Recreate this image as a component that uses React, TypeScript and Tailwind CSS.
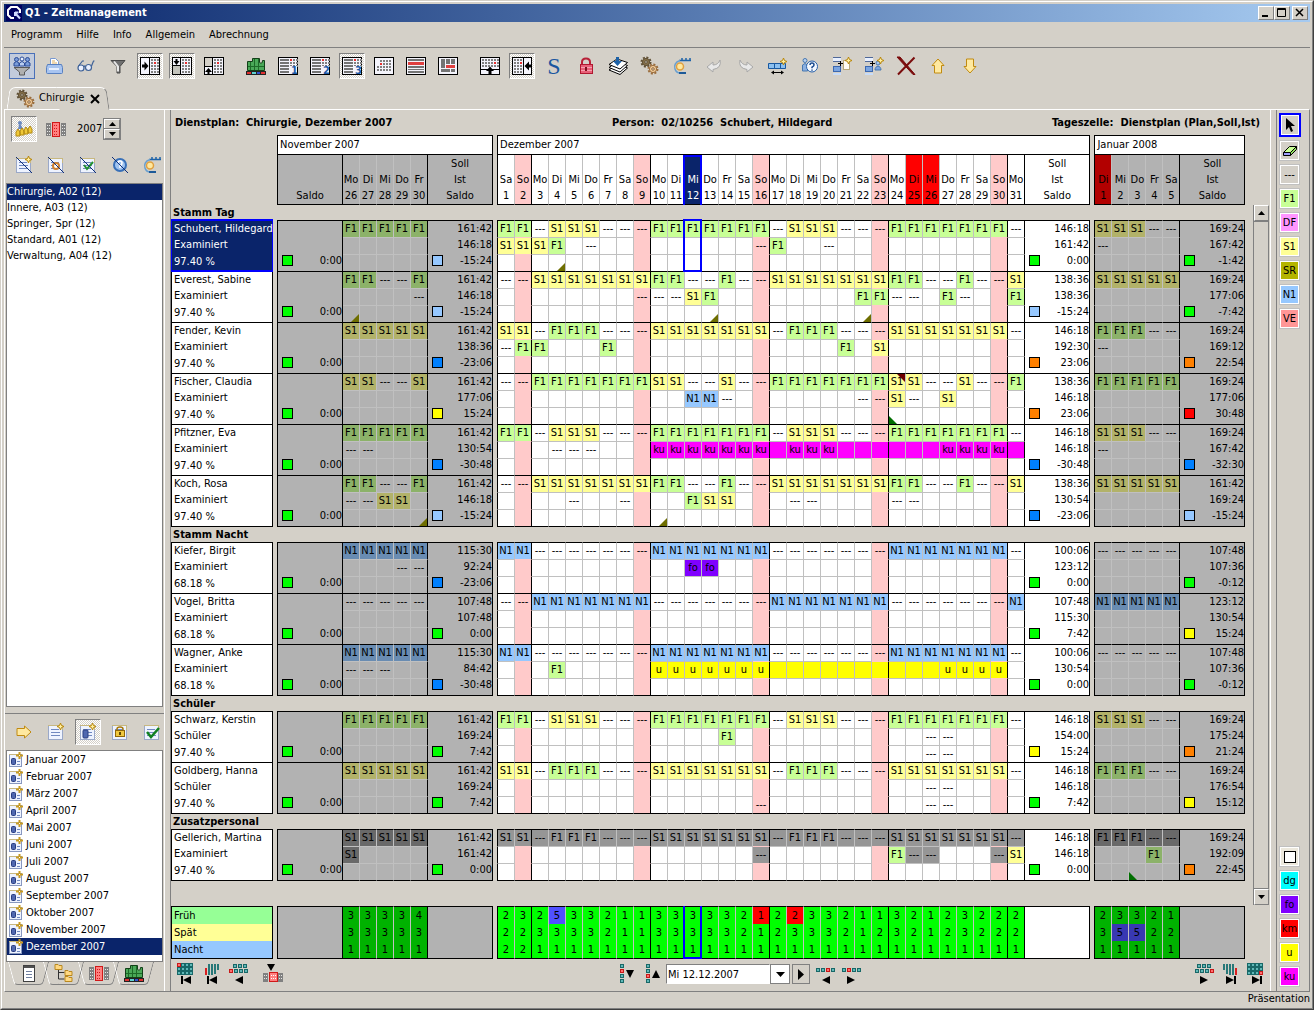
import { Fragment } from "react";
import type { ReactNode } from "react";
import clsx from "clsx";

type Sum = { color: string; values: string[] };

type Person = {
  name: string;
  role: string;
  quota: string;
  nov: string[];
  dec: string[];
  jan: string[];
  novSum: Sum;
  decSum: Sum;
  janSum: Sum;
};

type Month = "nov" | "dec" | "jan";

const WEEKDAYS = ["Sa", "So", "Mo", "Di", "Mi", "Do", "Fr"];
const NOV_DAYS = ["Mo 26", "Di 27", "Mi 28", "Do 29", "Fr 30"];
const DEC_DAYS = Array.from({ length: 31 }, (_, i) => `${WEEKDAYS[i % 7]} ${i + 1}`);
const JAN_DAYS = ["Di 1", "Mi 2", "Do 3", "Fr 4", "Sa 5"];
const SELECTED_DAY = 11;

const MONTHS = [
  "Januar",
  "Februar",
  "März",
  "April",
  "Mai",
  "Juni",
  "Juli",
  "August",
  "September",
  "Oktober",
  "November",
  "Dezember",
];

const WARDS = [
  "Chirurgie, A02 (12)",
  "Innere, A03 (12)",
  "Springer, Spr (12)",
  "Standard, A01 (12)",
  "Verwaltung, A04 (12)",
];

// One character per day. Upper case K and U are absence days without a label,
// lower case f, s and "=" are shifts of additional staff.
const EARLY = "FF-SSS---FFFFFFF-SSS---FFFFFFF-";
const LATE = "SS-FFF---SSSSSSS-FFF---SSSSSSS-";
const FILL_EARLY = "--FFFFFFFSS--S--FFFFFFFSS--S--F";
const FILL_LATE = "--SSSSSSSFF--F--SSSSSSSFF--F--S";
const NIGHT = "NN-------NNNNNNN-------NNNNNNN-";

const LABELS: Record<string, string> = {
  F: "F1",
  f: "F1",
  S: "S1",
  s: "S1",
  N: "N1",
  "-": "---",
  "=": "---",
  k: "ku",
  u: "u",
  o: "fo",
};

const FILLS: Record<string, string> = {
  F: "bg-[#c8ff96]",
  S: "bg-[#ffff96]",
  N: "bg-[#96c8ff]",
  k: "bg-[#ff00ff]",
  K: "bg-[#ff00ff]",
  u: "bg-[#ffff00]",
  U: "bg-[#ffff00]",
  o: "bg-[#8000ff]",
  f: "bg-[#969696]",
  s: "bg-[#969696]",
  "=": "bg-[#969696]",
};

const DIM_FILLS: Record<string, string> = {
  F: "bg-[#8cb269]",
  S: "bg-[#b2b269]",
  N: "bg-[#698cb2]",
  f: "bg-[#696969]",
  s: "bg-[#696969]",
  "=": "bg-[#696969]",
};

const SQUARES: Record<string, string> = {
  green: "bg-[#00ff00]",
  light: "bg-[#96c8ff]",
  blue: "bg-[#0080ff]",
  yellow: "bg-[#ffff00]",
  orange: "bg-[#ff8000]",
  red: "bg-[#ff0000]",
};

const sum = (color: string, ...values: string[]): Sum => ({ color, values });

const GROUPS: { title: string; people: Person[] }[] = [
  {
    title: "Stamm Tag",
    people: [
      {
        name: "Schubert, Hildegard",
        role: "Examiniert",
        quota: "97.40 %",
        nov: ["FFFFF"],
        dec: [EARLY, "SSSF.-.........-F..-..........."],
        jan: ["SSS--", "-...."],
        novSum: sum("light", "161:42", "146:18", "-15:24"),
        decSum: sum("green", "146:18", "161:42", "0:00"),
        janSum: sum("green", "169:24", "167:42", "-1:42"),
      },
      {
        name: "Everest, Sabine",
        role: "Examiniert",
        quota: "97.40 %",
        nov: ["FF--F", "....-"],
        dec: [FILL_LATE, "........---SF........FF--.F-..F"],
        jan: ["SSSSS"],
        novSum: sum("light", "161:42", "146:18", "-15:24"),
        decSum: sum("light", "138:36", "138:36", "-15:24"),
        janSum: sum("green", "169:24", "177:06", "-7:42"),
      },
      {
        name: "Fender, Kevin",
        role: "Examiniert",
        quota: "97.40 %",
        nov: ["SSSSS"],
        dec: [LATE, "-FF...F.............F.S........"],
        jan: ["FFF--", "-...."],
        novSum: sum("blue", "161:42", "138:36", "-23:06"),
        decSum: sum("orange", "146:18", "192:30", "23:06"),
        janSum: sum("orange", "169:24", "169:12", "22:54"),
      },
      {
        name: "Fischer, Claudia",
        role: "Examiniert",
        quota: "97.40 %",
        nov: ["SS--S"],
        dec: [FILL_EARLY, "...........NN-.......--S-.S...."],
        jan: ["FFFFF"],
        novSum: sum("yellow", "161:42", "177:06", "15:24"),
        decSum: sum("orange", "138:36", "146:18", "23:06"),
        janSum: sum("red", "169:24", "177:06", "30:48"),
      },
      {
        name: "Pfitzner, Eva",
        role: "Examiniert",
        quota: "97.40 %",
        nov: ["FFFFF", "--..."],
        dec: [EARLY, "...---...kkkkkkkKkkkKKKKKKkkkkK"],
        jan: ["SSS--", "-...."],
        novSum: sum("blue", "161:42", "130:54", "-30:48"),
        decSum: sum("blue", "146:18", "146:18", "-30:48"),
        janSum: sum("blue", "169:24", "167:42", "-32:30"),
      },
      {
        name: "Koch, Rosa",
        role: "Examiniert",
        quota: "97.40 %",
        nov: ["FF--F", "--SS."],
        dec: [FILL_LATE, "....-..-...FSS...--....--......"],
        jan: ["SSSSS"],
        novSum: sum("light", "161:42", "146:18", "-15:24"),
        decSum: sum("blue", "138:36", "130:54", "-23:06"),
        janSum: sum("light", "161:42", "169:24", "-15:24"),
      },
    ],
  },
  {
    title: "Stamm Nacht",
    people: [
      {
        name: "Kiefer, Birgit",
        role: "Examiniert",
        quota: "68.18 %",
        nov: ["NNNNN", "...--"],
        dec: [NIGHT, "...........oo.................."],
        jan: ["-----"],
        novSum: sum("blue", "115:30", "92:24", "-23:06"),
        decSum: sum("green", "100:06", "123:12", "0:00"),
        janSum: sum("green", "107:48", "107:36", "-0:12"),
      },
      {
        name: "Vogel, Britta",
        role: "Examiniert",
        quota: "68.18 %",
        nov: ["-----"],
        dec: ["--NNNNNNN-------NNNNNNN-------N"],
        jan: ["NNNNN"],
        novSum: sum("green", "107:48", "107:48", "0:00"),
        decSum: sum("green", "107:48", "115:30", "7:42"),
        janSum: sum("yellow", "123:12", "130:54", "15:24"),
      },
      {
        name: "Wagner, Anke",
        role: "Examiniert",
        quota: "68.18 %",
        nov: ["NNNNN", "---.."],
        dec: [NIGHT, "...F.....uuuuuuuUUUUUUUUUUuuuu."],
        jan: ["-----"],
        novSum: sum("blue", "115:30", "84:42", "-30:48"),
        decSum: sum("green", "100:06", "130:54", "0:00"),
        janSum: sum("green", "107:48", "107:36", "-0:12"),
      },
    ],
  },
  {
    title: "Schüler",
    people: [
      {
        name: "Schwarz, Kerstin",
        role: "Schüler",
        quota: "97.40 %",
        nov: ["FFFFF"],
        dec: [
          EARLY,
          ".............F...........--....",
          ".........................--....",
        ],
        jan: ["SSS--"],
        novSum: sum("green", "161:42", "169:24", "7:42"),
        decSum: sum("yellow", "146:18", "154:00", "15:24"),
        janSum: sum("orange", "169:24", "175:24", "21:24"),
      },
      {
        name: "Goldberg, Hanna",
        role: "Schüler",
        quota: "97.40 %",
        nov: ["SSSSS"],
        dec: [
          LATE,
          ".........................--....",
          "...............-.........--....",
        ],
        jan: ["FFF--"],
        novSum: sum("green", "161:42", "169:24", "7:42"),
        decSum: sum("green", "146:18", "146:18", "7:42"),
        janSum: sum("yellow", "169:24", "176:54", "15:12"),
      },
    ],
  },
  {
    title: "Zusatzpersonal",
    people: [
      {
        name: "Gellerich, Martina",
        role: "Examiniert",
        quota: "97.40 %",
        nov: ["sssss", "s...."],
        dec: [
          "ss=fff===sssssss=fff===sssssss=",
          "...............=.......F==...=S",
        ],
        jan: ["fff==", "...F."],
        novSum: sum("green", "161:42", "161:42", "0:00"),
        decSum: sum("green", "146:18", "146:18", "0:00"),
        janSum: sum("orange", "169:24", "192:09", "22:45"),
      },
    ],
  },
];

// Corner flags, keyed by name:month:row:day index
const FLAGS: Record<string, "olive" | "green" | "red"> = {
  "Schubert, Hildegard:dec:2:3": "olive",
  "Everest, Sabine:nov:2:0": "olive",
  "Everest, Sabine:dec:2:12": "olive",
  "Everest, Sabine:dec:2:21": "olive",
  "Fischer, Claudia:dec:0:23": "red",
  "Fischer, Claudia:dec:2:23": "green",
  "Koch, Rosa:nov:2:4": "olive",
  "Koch, Rosa:dec:2:9": "olive",
  "Gellerich, Martina:jan:2:2": "green",
};

const STAFFING = [
  {
    label: "Früh",
    bg: "bg-[#96ff96]",
    nov: "33334",
    dec: "2325332113333321223321132123222",
    jan: "23321",
  },
  {
    label: "Spät",
    bg: "bg-[#ffff96]",
    nov: "33333",
    dec: "2233332113333321233321232123222",
    jan: "35522",
  },
  {
    label: "Nacht",
    bg: "bg-[#96c8ff]",
    nov: "11111",
    dec: "2211111111111111111111111111111",
    jan: "11111",
  },
];

const isSunday = (month: Month, day: number) => month === "dec" && day % 7 === 1;

function rightLine(month: Month, day: number) {
  if (month === "dec") {
    return isSunday(month, day) || day === 30 ? "border-r-black" : "border-r-[#c0c0c0]";
  }
  return day === 4 ? "border-r-black" : "border-r-[#c0c0c0]";
}

const hasLeftLine = (month: Month, day: number) => month !== "nov" && day === 0;

/* ---------- icons ---------- */

function Pic({ children, w = 20, h = 20 }: { children: ReactNode; w?: number; h?: number }) {
  return (
    <svg width={w} height={h} viewBox={`0 0 ${w} ${h}`} fill="none" aria-hidden="true" className="shrink-0 overflow-visible">
      {children}
    </svg>
  );
}

function Spark({ x, y }: { x: number; y: number }) {
  return (
    <path
      transform={`translate(${x} ${y})`}
      d="M3.5 0 L4.5 2.5 L7 3.5 L4.5 4.5 L3.5 7 L2.5 4.5 L0 3.5 L2.5 2.5Z"
      fill="#fff0a0"
      stroke="#b8860b"
      strokeWidth="1"
    />
  );
}

function Dots({ x, y, cols, rows, red }: { x: number; y: number; cols: number; rows: number; red?: number }) {
  return (
    <g shapeRendering="crispEdges">
      {Array.from({ length: cols * rows }, (_, i) => (
        <rect
          key={i}
          x={x + (i % cols) * 3}
          y={y + Math.floor(i / cols) * 3}
          width="2"
          height="2"
          fill={i === red ? "#e83030" : "#808080"}
        />
      ))}
    </g>
  );
}

function Frame({ children }: { children?: ReactNode }) {
  return (
    <Pic>
      <rect x="0.5" y="1.5" width="19" height="17" fill="#f4f4fc" stroke="#000" />
      {children}
    </Pic>
  );
}

function Bars({ n, w = 9 }: { n: number; w?: number }) {
  return (
    <g fill="#747474" shapeRendering="crispEdges">
      {Array.from({ length: n }, (_, i) => (
        <rect key={i} x="2" y={3 + i * 3} width={w} height="2" />
      ))}
    </g>
  );
}

function NumberedPlan({ n }: { n: string }) {
  return (
    <Frame>
      <Bars n={5} />
      <Dots x={12} y={3} cols={2} rows={3} red={0} />
      <Dots x={18} y={3} cols={1} rows={3} />
      <rect x="12" y="10" width="7" height="8" fill="#f4f4fc" />
      <text x="13" y="18" fontSize="11" fontWeight="700" fill="#1c5aa8">
        {n}
      </text>
    </Frame>
  );
}

const Gear = ({ x, y, fill, line }: { x: number; y: number; fill: string; line: string }) => (
  <g transform={`translate(${x} ${y})`}>
    <circle r="4.5" stroke={line} strokeWidth="2" strokeDasharray="2 1.5" />
    <circle r="3.6" fill={fill} stroke={line} strokeWidth="1" />
    <circle r="1.3" fill="#d4d0c8" stroke={line} strokeWidth="1" />
  </g>
);

const GearsIcon = () => (
  <Pic>
    <Gear x={6} y={6} fill="#85704a" line="#5f4f34" />
    <Gear x={13} y={13} fill="#f0cb98" line="#9a6c3c" />
  </Pic>
);

const StationIcon = () => (
  <Pic>
    <path d="M1.500 14.500V5.500h5v-3h7v4q3 2 3-2h2v10z" fill="#4aa858" stroke="#124018" />
    <path d="M4.500 6v8M8.500 3v11M12.500 3v11M2 10.500h16" stroke="#1d6a28" />
    <g shapeRendering="crispEdges">
      <rect x="0" y="15" width="20" height="4" fill="#222" />
      <rect x="1" y="16" width="4" height="2" fill="#e03030" />
      <rect x="6" y="16" width="4" height="2" fill="#5fd0d0" />
      <rect x="11" y="16" width="3" height="2" fill="#3050d0" />
      <rect x="15" y="16" width="4" height="2" fill="#e03030" />
    </g>
  </Pic>
);

const MonthsIcon = () => (
  <Pic>
    <rect x="0" y="4" width="5" height="13" fill="#808080" />
    <rect x="15" y="4" width="5" height="13" fill="#808080" />
    <rect x="6.500" y="3.500" width="7" height="14" fill="#ff8080" stroke="#d01818" />
    <path d="M8 6.500h4M8 9.500h4M8 12.500h4M8 15.500h4" stroke="#d01818" strokeDasharray="1 1" />
    <path d="M1 6.500h3M1 9.500h3M1 12.500h3M1 15.500h3M16 6.500h3M16 9.500h3M16 12.500h3M16 15.500h3" stroke="#e8e8e8" strokeDasharray="1 1" />
  </Pic>
);

const ToolIcon = () => (
  <Pic>
    <path d="M7 4.500h12M10 4v-2M14 4v-2M18 4v-2" stroke="#1d62a8" strokeWidth="1.500" />
    <path d="M8 4.500C3 6 2 10 3 13c1 3 3 4 5 4h6" stroke="#6aa0d0" strokeWidth="1.500" />
    <path d="M7 17h7" stroke="#1d5a98" strokeWidth="2" />
    <circle cx="8" cy="10.500" r="3.500" fill="#ffe9a0" stroke="#e0a040" strokeWidth="1.500" />
  </Pic>
);

const SheetIcon = ({ children }: { children?: ReactNode }) => (
  <Pic>
    <rect x="2.500" y="3.500" width="14" height="14" fill="#eef3ff" stroke="#9aa8c8" />
    <path d="M2 3.500h15M16.500 3v5" stroke="#c8b880" />
    <path d="M5 7.500h8M5 10.500h9M5 13.500h9" stroke="#7088c0" />
    {children}
  </Pic>
);

const Strike = () => <path d="M2 2L18 18" stroke="#10307a" />;

const PlanIcon = () => (
  <>
    <rect x="5" y="8" width="5" height="8" rx="1" fill="#5068b0" stroke="#283c80" />
    <Spark x={11} y={1} />
  </>
);

const MonthEntryIcon = () => (
  <Pic w={14} h={16}>
    <rect x="0.500" y="2.500" width="12" height="12" fill="#eef3ff" stroke="#8898c0" />
    <path d="M0 2.500h9" stroke="#c8b880" />
    <rect x="2.500" y="6.500" width="4" height="6" rx="1" fill="#5068b0" stroke="#283c80" />
    <path d="M8 9.500h3M8 12.500h3" stroke="#7088c0" />
    <path d="M10.500 0v7M7 3.500h7" stroke="#c89a20" strokeWidth="2" />
    <rect x="10" y="3" width="1" height="1" fill="#fff" />
  </Pic>
);

const SlotIcon = ({ person }: { person?: boolean }) => (
  <Pic>
    <path d="M1 1.500h8M1 5.500h8M1 18.500h8" stroke="#506898" />
    <rect x="1" y="2" width="8" height="3" fill="#e8f0ff" />
    <path d="M6 7.500h5M8.500 5v5" stroke="#000" />
    <rect x="1.500" y="10.500" width="7" height="5" fill="#7aa4e0" stroke="#3c68b0" />
    <rect x="1" y="17" width="8" height="2" fill="#c8dcf8" />
    {person ? (
      <>
        <circle cx="14" cy="7" r="2" fill="#a8c8f0" stroke="#4878b0" />
        <path d="M11 14c0-5 6-5 6 0z" fill="#7aa4e0" stroke="#4878b0" />
      </>
    ) : (
      <rect x="11.500" y="4.500" width="6" height="9" fill="#fffdf4" stroke="#b8a878" />
    )}
    <Spark x={13} y={1} />
  </Pic>
);

const ArrowPath = ({ rotate }: { rotate: number }) => (
  <path
    transform={`rotate(${rotate} 10 10)`}
    d="M10 3L16 9.500H13.500V17H6.500V9.500H4Z"
    fill="#ffe9a0"
    stroke="#c08a10"
  />
);

type Tool = { label: string; icon: ReactNode; pressed?: boolean; hover?: boolean };

const TOOL_GROUPS: Tool[][] = [
  [
    {
      label: "Personenfilter",
      hover: true,
      icon: (
        <Pic>
          <g fill="#7a9cd8" stroke="#2c4c98">
            <circle cx="4.500" cy="3.500" r="2" />
            <circle cx="15.500" cy="3.500" r="2" />
            <path d="M2 10V7q2.500-3 5 0v3zM13 10V7q2.500-3 5 0v3z" />
            <circle cx="10" cy="3" r="2" fill="#e8f0ff" />
            <path d="M7.500 10V7q2.500-3 5 0v3z" fill="#b8ccf0" />
          </g>
          <path d="M2 11.500h16l-5.500 4.500v3h-5v-3z" fill="#b0b0b0" stroke="#585858" />
        </Pic>
      ),
    },
    {
      label: "Drucken",
      icon: (
        <Pic>
          <path d="M6.500 9V2.500h5l3 3V9" fill="#fff" stroke="#7898d0" />
          <path d="M8 5h3M8 7h5" stroke="#e0b060" />
          <path d="M3.500 8.500h14l1 3v5q0 1-1 1h-14q-1 0-1-1v-5z" fill="#a8c4f0" stroke="#5880c0" />
          <path d="M5 13h10" stroke="#e8f0ff" strokeWidth="2" />
        </Pic>
      ),
    },
    {
      label: "Ansicht",
      icon: (
        <Pic>
          <g stroke="#3f6298" strokeWidth="1.200">
            <circle cx="5" cy="12" r="3" fill="#eaf0ff" />
            <circle cx="12.500" cy="11.500" r="3" fill="#eaf0ff" />
            <path d="M8 11q.5-1.500 1.500-1M2.500 10L6.500 5h1.500M15.500 10L17.500 5h1" />
          </g>
        </Pic>
      ),
    },
    {
      label: "Filter",
      icon: (
        <Pic>
          <path d="M3 4.500h14l-5 6v6.500h-3v-6.500z" fill="#707070" stroke="#484848" />
          <path d="M6 5.500l4 5v5" stroke="#e8e8e8" strokeWidth="2" />
        </Pic>
      ),
    },
    {
      label: "Vormonat",
      pressed: true,
      icon: (
        <Frame>
          <path d="M9.500 2v16" stroke="#000" />
          <path d="M2 8.500h2.500v-3l4 4.500-4 4.500v-3H2z" fill="#000" />
          <Dots x={11} y={3} cols={3} rows={5} red={4} />
        </Frame>
      ),
    },
    {
      label: "Kopf links",
      pressed: true,
      icon: (
        <Frame>
          <rect x="1" y="10" width="7" height="8" fill="#c4c4bc" />
          <path d="M8.500 2v16M1 9.500h7" stroke="#000" />
          <path d="M3.500 3h2v2h2L4.500 9 1.500 5h2z" fill="#000" />
          <Dots x={10} y={3} cols={3} rows={5} red={4} />
        </Frame>
      ),
    },
    {
      label: "Fuß links",
      icon: (
        <Frame>
          <rect x="1" y="2" width="7" height="9" fill="#d4d0c8" />
          <path d="M8.500 2v16M1 10.500h7" stroke="#000" />
          <path d="M3.500 18h2v-2h2.500l-3.500-4-3.500 4h2.500z" fill="#000" />
          <Dots x={10} y={3} cols={3} rows={5} red={4} />
        </Frame>
      ),
    },
  ],
  [
    { label: "Station", icon: <StationIcon /> },
    { label: "Plan 1", icon: <NumberedPlan n="1" /> },
    { label: "Plan 2", icon: <NumberedPlan n="2" /> },
    { label: "Plan 3", icon: <NumberedPlan n="3" />, pressed: true },
    {
      label: "Tagesraster",
      icon: (
        <Frame>
          <Dots x={6} y={4} cols={4} rows={4} red={4} />
          <Dots x={3} y={10} cols={1} rows={2} />
        </Frame>
      ),
    },
    {
      label: "Zeilen",
      icon: (
        <Frame>
          <g fill="#747474" shapeRendering="crispEdges">
            <rect x="2" y="3" width="16" height="2" />
            <rect x="2" y="6" width="16" height="3" fill="#e04040" />
            <rect x="2" y="10" width="16" height="2" />
            <rect x="2" y="13" width="16" height="1" />
            <rect x="2" y="15" width="16" height="2" />
          </g>
        </Frame>
      ),
    },
    {
      label: "Blöcke",
      icon: (
        <Frame>
          <g fill="#747474" shapeRendering="crispEdges">
            <rect x="3" y="3" width="4" height="9" />
            <rect x="8" y="3" width="4" height="5" />
            <rect x="13" y="3" width="4" height="5" />
            <rect x="8" y="9" width="9" height="3" fill="#e04040" />
            <rect x="3" y="13" width="9" height="3" />
            <rect x="13" y="13" width="4" height="3" />
          </g>
        </Frame>
      ),
    },
  ],
  [
    {
      label: "Bedarf unten",
      icon: (
        <Frame>
          <Dots x={2} y={3} cols={6} rows={3} red={10} />
          <path d="M1 13.500h18" stroke="#000" />
          <path d="M8.500 18v-3H6l4-4.500 4 4.500h-2.500v3z" fill="#000" />
        </Frame>
      ),
    },
    {
      label: "Folgemonat",
      pressed: true,
      icon: (
        <Frame>
          <path d="M11.500 2v16" stroke="#000" />
          <path d="M19 8.500h-2v-3L12.500 10l4.500 4.500v-3h2z" fill="#000" />
          <Dots x={2} y={3} cols={3} rows={5} red={5} />
        </Frame>
      ),
    },
    { label: "Soll", icon: <span className="font-['Liberation_Serif',serif] text-2xl leading-5 text-[#1a56a0]">S</span> },
    {
      label: "Sperren",
      icon: (
        <Pic>
          <path d="M6 9V6q0-3.500 4-3.500T14 6v3" stroke="#b82038" strokeWidth="2" />
          <rect x="4.500" y="8.500" width="12" height="9" fill="#e86078" stroke="#b01830" />
          <path d="M5 11.500h11M5 14.500h11" stroke="#f8a0b0" />
          <rect x="9" y="11" width="2" height="4" fill="#801020" />
        </Pic>
      ),
    },
    {
      label: "Übernehmen",
      icon: (
        <Pic>
          <g fill="#fff" stroke="#000">
            <path d="M1 14l11 4.500L19.500 12l-10-4z" />
            <path d="M1 11.500l11 4.500 7.500-6.500-10-4z" />
            <path d="M1 8.500L12 13l7.500-6.500L9 3z" />
          </g>
          <path d="M8 1h3v4h3l-4.500 5L5 5h3z" fill="#1d62a8" />
        </Pic>
      ),
    },
    { label: "Automatik", icon: <GearsIcon /> },
    { label: "Werkzeug", icon: <ToolIcon /> },
    {
      label: "Rückgängig",
      icon: (
        <Pic>
          <path d="M3 11l6-5v3q5 0 7-5 2 8-7 9.500V16z" fill="#e8e8e8" stroke="#a8a8a8" />
        </Pic>
      ),
    },
    {
      label: "Wiederholen",
      icon: (
        <Pic>
          <path d="M17 11l-6-5v3q-5 0-7-5-2 8 7 9.500V16z" fill="#e8e8e8" stroke="#a8a8a8" />
        </Pic>
      ),
    },
    {
      label: "Dienstfolge",
      icon: (
        <Pic>
          <path d="M0.500 7.500h6v5h-6zM6.500 7.500h6v5h-6zM12.500 7.500h5v5h-5z" fill="#8cc0f0" stroke="#1858a0" />
          <path d="M4 16.500h11" stroke="#000" />
          <path d="M3 16.500l3-2v4zM16 16.500l-3-2v4z" fill="#000" />
          <Spark x={12} y={2} />
        </Pic>
      ),
    },
    {
      label: "Personeninfo",
      icon: (
        <Pic>
          <circle cx="5" cy="4.500" r="2" fill="#b8d0f0" stroke="#4878b0" />
          <path d="M2.500 15V9q2.500-3 5 0v6z" fill="#8cb0e0" stroke="#4878b0" />
          <circle cx="12" cy="10.500" r="5.500" fill="#f4f8ff" stroke="#2860a8" />
          <path d="M10 9q0-2 2-2t2 2q0 1.200-2 2.200v1M12 13.500v1.200" stroke="#1c4c90" strokeWidth="1.500" />
        </Pic>
      ),
    },
    { label: "Slot einfügen", icon: <SlotIcon /> },
    { label: "Person einfügen", icon: <SlotIcon person /> },
    {
      label: "Löschen",
      icon: (
        <Pic>
          <path d="M1 1h3l15 17.500h-2z" fill="#7a0c0c" stroke="#7a0c0c" />
          <path d="M18.500 1.500L2 18.500" stroke="#7a0c0c" strokeWidth="2" />
        </Pic>
      ),
    },
    { label: "Nach oben", icon: <Pic><ArrowPath rotate={0} /></Pic> },
    { label: "Nach unten", icon: <Pic><ArrowPath rotate={180} /></Pic> },
  ],
];

const Tiles = ({ at, red }: { at: [number, number][]; red: number }) => (
  <g shapeRendering="crispEdges">
    {at.map(([x, y], i) => (
      <g key={i}>
        <rect x={x} y={y} width="4" height="4" fill={i === red ? "#c81818" : "#186868"} />
        <rect x={x + 1} y={y + 1} width="2" height="2" fill={i === red ? "#ff7070" : "#60b8b8"} />
      </g>
    ))}
  </g>
);

const Triangle = ({ dir, bar }: { dir: "left" | "right"; bar?: boolean }) =>
  dir === "left" ? (
    <g fill="#000">
      {bar && <rect x="4" y="14" width="2" height="8" />}
      <path d="M14 14v8l-8-4z" />
    </g>
  ) : (
    <g fill="#000">
      {bar && <rect x="13" y="14" width="2" height="8" />}
      <path d="M5 14v8l8-4z" />
    </g>
  );

const BLOCK: [number, number][] = Array.from({ length: 12 }, (_, i) => [(i % 4) * 4, 1 + Math.floor(i / 4) * 4]);
const LEFT_STEPS: [number, number][] = [[4, 2], [9, 2], [14, 2], [0, 7], [5, 7], [10, 7], [15, 7]];
const RIGHT_STEPS: [number, number][] = [[2, 2], [7, 2], [12, 2], [0, 7], [5, 7], [10, 7], [15, 7]];
const LINE: [number, number][] = [[0, 6], [5, 6], [10, 6], [15, 6]];
const COLUMN: [number, number][] = [[2, 2], [2, 7], [2, 12], [2, 17]];

const Columns = ({ mirror }: { mirror?: boolean }) => (
  <g shapeRendering="crispEdges" transform={mirror ? "translate(18 0) scale(-1 1)" : undefined}>
    <rect x="2" y="6" width="2" height="7" fill="#d82020" />
    <rect x="5" y="2" width="2" height="11" fill="#287878" />
    <rect x="8" y="2" width="2" height="11" fill="#287878" />
    <rect x="11" y="2" width="2" height="10" fill="#287878" />
    <rect x="14" y="2" width="2" height="6" fill="#287878" />
  </g>
);

/* ---------- controls ---------- */

const pressedLook =
  "border-t border-l border-t-[#808080] border-l-[#808080] border-r border-b border-r-white border-b-white bg-[repeating-conic-gradient(#ffffff_0_25%,#d4d0c8_0_50%)] bg-[length:2px_2px]";
const raisedLook =
  "border border-t-white border-l-white border-r-[#808080] border-b-[#808080] bg-[#d4d0c8]";

function ToolButton({ tool }: { tool: Tool }) {
  return (
    <button
      type="button"
      aria-label={tool.label}
      aria-pressed={tool.pressed}
      className={clsx(
        "flex size-[26px] shrink-0 items-center justify-center",
        tool.pressed && pressedLook,
        tool.hover && "border border-[#4a70b8] bg-[#c2cbdc]",
      )}
    >
      {tool.icon}
    </button>
  );
}

function NavButton({ label, children, w = 18 }: { label: string; children: ReactNode; w?: number }) {
  return (
    <button type="button" aria-label={label} className="flex">
      <Pic w={w} h={24}>{children}</Pic>
    </button>
  );
}

function TitleBar() {
  return (
    <header className="flex h-[18px] items-center bg-linear-to-r from-[#0a246a] to-[#a6caf0] px-0.5">
      <svg width="16" height="16" viewBox="0 0 16 16" aria-hidden="true">
        <rect width="16" height="16" fill="#000060" />
        <path d="M8 13H5L2 10V5l3-3h6l3 3v3" fill="none" stroke="#fff" strokeWidth="2" />
        <path d="M9 8l5 5.500M9 7v4M9 7.500h3.500" stroke="#d0d8ff" strokeWidth="2" />
      </svg>
      <h1 className="ml-[3px] flex-1 text-[11px] leading-4 font-bold text-white">Q1 - Zeitmanagement</h1>
      <div className="flex">
        <button type="button" aria-label="Minimieren" className={clsx("flex h-[14px] w-4 items-center justify-center", raisedLook)}>
          <Pic w={10} h={10}><path d="M1 8h6" stroke="#000" strokeWidth="2" /></Pic>
        </button>
        <button type="button" aria-label="Maximieren" className={clsx("flex h-[14px] w-4 items-center justify-center", raisedLook)}>
          <Pic w={10} h={10}><path d="M0.500 0.500h8v8h-8zM0 1.500h9" stroke="#000" /></Pic>
        </button>
        <button type="button" aria-label="Schließen" className={clsx("ml-0.5 flex h-[14px] w-4 items-center justify-center", raisedLook)}>
          <Pic w={10} h={10}><path d="M1 1l7 7M8 1L1 8" stroke="#000" strokeWidth="1.500" /></Pic>
        </button>
      </div>
    </header>
  );
}

function Sidebar() {
  return (
    <aside className="flex w-[160px] shrink-0 flex-col border-r border-white pb-1">
      <div className="flex h-9 items-center pt-0.5 pl-1.5">
        <ToolButton
          tool={{
            label: "Stationen",
            pressed: true,
            icon: (
              <Pic>
                <circle cx="6" cy="4" r="2" fill="#6888c0" />
                <path d="M4 10l1-4h2l2 4z" fill="#6888c0" />
                <g fill="#f0c838" stroke="#b08810">
                  <path d="M2 17v-4l2-3 2 3v4zM6 16v-4l2-3 2 3v4zM10 15v-4l2-3 2 3v4zM14 14v-4l2-3 2 3v4z" />
                </g>
              </Pic>
            ),
          }}
        />
        <button type="button" aria-label="Monate" className="ml-[9px]">
          <MonthsIcon />
        </button>
        <label htmlFor="year" className="sr-only">
          Jahr
        </label>
        <input id="year" defaultValue="2007" className="ml-[11px] w-[27px] bg-transparent" />
        <div className="flex flex-col">
          <button type="button" aria-label="Jahr vor" className={clsx("flex h-[10px] w-4 items-center justify-center outline outline-[#808080]", raisedLook)}>
            <Pic w={7} h={4}><path d="M0 4h7L3.500 0z" fill="#000" /></Pic>
          </button>
          <button type="button" aria-label="Jahr zurück" className={clsx("flex h-[10px] w-4 items-center justify-center outline outline-[#808080]", raisedLook)}>
            <Pic w={7} h={4}><path d="M0 0h7L3.500 4z" fill="#000" /></Pic>
          </button>
        </div>
      </div>
      <div className="flex h-[37px] items-center gap-1.5 pl-1.5">
        <ToolButton tool={{ label: "Planung aus", icon: <SheetIcon><Spark x={11} y={1} /><Strike /></SheetIcon> }} />
        <ToolButton tool={{ label: "Offen aus", icon: <SheetIcon><circle cx="10" cy="11" r="3" fill="#fff" stroke="#d08030" strokeWidth="2" /><Strike /></SheetIcon> }} />
        <ToolButton tool={{ label: "Geprüft aus", icon: <SheetIcon><path d="M6 10l3 4 6-7" stroke="#209030" strokeWidth="2" /><Strike /></SheetIcon> }} />
        <ToolButton tool={{ label: "Info aus", icon: <Pic><circle cx="10" cy="10" r="6" fill="#a0c4f0" stroke="#3870b8" strokeWidth="2" /><path d="M8 8q0-2 2-2t2 2-2 3v2" stroke="#fff" strokeWidth="1.500" /><Strike /></Pic> }} />
        <ToolButton tool={{ label: "Werkzeug", icon: <ToolIcon /> }} />
      </div>
      <ul className="mx-px flex-1 border border-[#808080] bg-white">
        {WARDS.map((ward, i) => (
          <li key={ward}>
            <button
              type="button"
              className={clsx("block h-4 w-full text-left leading-4 whitespace-nowrap", i === 0 && "bg-[#0a246a] text-white")}
            >
              {ward}
            </button>
          </li>
        ))}
      </ul>
      <div className="mt-1.5 flex h-[37px] items-center gap-1.5 border-t border-[#808080] pl-1.5">
        <ToolButton tool={{ label: "Weiter", icon: <Pic><ArrowPath rotate={90} /></Pic> }} />
        <ToolButton tool={{ label: "Planung", icon: <SheetIcon><Spark x={11} y={1} /></SheetIcon> }} />
        <ToolButton tool={{ label: "Dienstplan", pressed: true, icon: <SheetIcon><PlanIcon /></SheetIcon> }} />
        <ToolButton
          tool={{
            label: "Gesperrt",
            icon: (
              <SheetIcon>
                <path d="M7 9V7q0-2 3-2t3 2v2" stroke="#a87808" strokeWidth="1.500" />
                <rect x="5.500" y="8.500" width="9" height="6" fill="#f0c840" stroke="#906808" />
                <rect x="9" y="10" width="2" height="3" fill="#604800" />
              </SheetIcon>
            ),
          }}
        />
        <ToolButton tool={{ label: "Freigegeben", icon: <SheetIcon><path d="M5 10l4 5 8-9" stroke="#108020" strokeWidth="2.500" /></SheetIcon> }} />
      </div>
      <ul className="mx-px border border-[#808080] bg-white pb-1.5">
        {MONTHS.map((month, i) => (
          <li key={month}>
            <button
              type="button"
              className={clsx("flex h-[17px] w-full items-center gap-[3px] pl-0.5 leading-4", i === 11 && "bg-[#0a246a] text-white")}
            >
              <MonthEntryIcon />
              {month} 2007
            </button>
          </li>
        ))}
      </ul>
      <nav className="flex h-[25px] pl-1.5">
        {[
          <Pic key="list"><rect x="4.500" y="2.500" width="11" height="16" fill="#fff" stroke="#404040" /><rect x="5" y="3" width="10" height="2" fill="#505050" /><path d="M7 8.500h6M7 11.500h6M7 14.500h6" stroke="#7080a0" /></Pic>,
          <Pic key="tree"><path d="M4.500 6v10h6M4.500 9.500h6" stroke="#303030" /><path d="M1 1.500h3l1 1h3v4H1zM11 7.500h3l1 1h3v4h-7zM11 13.500h3l1 1h3v4h-7z" fill="#ffd880" stroke="#b88820" /></Pic>,
          <MonthsIcon key="months" />,
          <StationIcon key="station" />,
        ].map((icon, i) => (
          <button key={i} type="button" aria-label={["Liste", "Baum", "Monate", "Station"][i]} className="relative flex h-[23px] w-[35px] justify-center pt-px">
            <span className="absolute inset-y-0 left-0 w-4 skew-x-[15deg] rounded-bl border-b border-l border-b-[#808080] border-l-white" />
            <span className="absolute inset-y-0 right-0 w-5 -skew-x-[15deg] rounded-br border-r border-b border-[#808080]" />
            <span className="relative">{icon}</span>
          </button>
        ))}
      </nav>
    </aside>
  );
}

/* ---------- schedule ---------- */

function ScheduleColumns() {
  return (
    <colgroup>
      <col className="w-[102px]" />
      <col className="w-1" />
      <col className="w-[66px]" />
      <col span={5} className="w-[17px]" />
      <col className="w-[65px]" />
      <col className="w-1" />
      <col className="w-[18px]" />
      <col span={30} className="w-[17px]" />
      <col className="w-[65px]" />
      <col className="w-1" />
      <col className="w-[18px]" />
      <col span={4} className="w-[17px]" />
      <col className="w-[65px]" />
    </colgroup>
  );
}

const tableLook = "w-[1074px] table-fixed border-separate border-spacing-0";

function DayHead({ month, days }: { month: Month; days: string[] }) {
  return days.map((day, i) => {
    const [weekday, number] = day.split(" ");
    const selected = month === "dec" && i === SELECTED_DAY;
    const holiday = month === "dec" && (i === 24 || i === 25);
    return (
      <th
        key={day}
        scope="col"
        className={clsx(
          "relative h-[50px] border-r border-b border-b-black p-0 pt-[17px] text-center align-top font-normal",
          rightLine(month, i),
          hasLeftLine(month, i) && "border-l border-l-black",
          selected && "bg-[#0a246a] text-white",
          holiday && "bg-[#ff0000]",
          month === "jan" && i === 0 && "bg-[#b20000]",
          isSunday(month, i) && "bg-[#ffcaca]",
          month !== "dec" && !(month === "jan" && i === 0) && "bg-[#b2b2b2]",
          month === "dec" && !selected && !holiday && !isSunday(month, i) && "bg-white",
        )}
      >
        <span className="block leading-4">{weekday}</span>
        <span className="block h-[15px] leading-4">{number}</span>
        {selected && <span className="absolute top-0 -left-[2px] h-[50px] w-[19px] border-2 border-b-0 border-[#0000ff]" />}
      </th>
    );
  });
}

function SumHead({ dim }: { dim?: boolean }) {
  return (
    <th scope="col" className={clsx("border-r border-b border-black p-0 pt-px align-top font-normal", dim ? "bg-[#b2b2b2]" : "bg-white")}>
      <span className="block leading-4">Soll</span>
      <span className="block leading-4">Ist</span>
      <span className="block h-[15px] leading-4">Saldo</span>
    </th>
  );
}

function ScheduleHead() {
  const monthCell = "h-5 border border-black bg-white p-0 pl-0.5 text-left leading-4 font-normal";
  return (
    <table className={tableLook}>
      <ScheduleColumns />
      <thead>
        <tr>
          <td colSpan={2} className="p-0" />
          <th colSpan={7} className={monthCell}>November 2007</th>
          <td className="p-0" />
          <th colSpan={32} className={monthCell}>Dezember 2007</th>
          <td className="p-0" />
          <th colSpan={6} className={monthCell}>Januar 2008</th>
        </tr>
        <tr>
          <td colSpan={2} className="p-0" />
          <th scope="col" className="border-x border-b border-black bg-[#b2b2b2] p-0 align-bottom leading-4 font-normal">
            Saldo
          </th>
          <DayHead month="nov" days={NOV_DAYS} />
          <SumHead dim />
          <td className="p-0" />
          <DayHead month="dec" days={DEC_DAYS} />
          <SumHead />
          <td className="p-0" />
          <DayHead month="jan" days={JAN_DAYS} />
          <SumHead dim />
        </tr>
      </thead>
    </table>
  );
}

function Flag({ kind }: { kind: "olive" | "green" | "red" }) {
  return (
    <svg
      width="8"
      height="8"
      viewBox="0 0 8 8"
      aria-hidden="true"
      className={clsx(
        "absolute",
        kind === "olive" && "right-0 bottom-0",
        kind === "green" && "bottom-0 left-0",
        kind === "red" && "top-0 right-0",
      )}
    >
      {kind === "olive" && <path d="M8 0v8H0z" fill="#6e6e00" />}
      {kind === "green" && <path d="M0 0v8h8z" fill="#006e00" />}
      {kind === "red" && <path d="M0 0h8v8z" fill="#6e0000" />}
    </svg>
  );
}

function DayCells({ person, month, row, top }: { person: Person; month: Month; row: number; top: boolean }) {
  const count = month === "dec" ? 31 : 5;
  const codes = person[month][row] ?? ".".repeat(count);
  const dim = month !== "dec";
  return codes.split("").map((code, i) => {
    const flag = FLAGS[`${person.name}:${month}:${row}:${i}`];
    const sunday = isSunday(month, i);
    const fill = dim ? DIM_FILLS[code] : FILLS[code];
    const selected = month === "dec" && i === SELECTED_DAY && row === 0 && person.name === "Schubert, Hildegard";
    return (
      <td
        key={i}
        className={clsx(
          "relative border-r border-b p-0 text-center leading-4",
          top && "border-t border-t-black",
          rightLine(month, i),
          hasLeftLine(month, i) && "border-l border-l-black",
          row === 2 && "border-b-black",
          row < 2 && (sunday ? "border-b-[#ffcaca]" : "border-b-[#c0c0c0]"),
          fill ?? (dim ? "bg-[#b2b2b2]" : sunday ? "bg-[#ffcaca]" : "bg-white"),
        )}
      >
        <span className="block h-4">{LABELS[code]}</span>
        {flag && <Flag kind={flag} />}
        {selected && <span className="absolute -top-[2px] -left-[2px] z-10 h-[53px] w-[19px] border-2 border-[#0000ff]" />}
      </td>
    );
  });
}

const Square = ({ color }: { color: string }) => (
  <span className={clsx("block size-[11px] border border-black", SQUARES[color])} />
);

function SumCell({ data, dim, top }: { data: Sum; dim?: boolean; top: boolean }) {
  const [target, actual, balance] = data.values;
  return (
    <td
      rowSpan={3}
      className={clsx("border-r border-b border-black p-0 pl-1 text-right align-top leading-4", top && "border-t", dim ? "bg-[#b2b2b2]" : "bg-white")}
    >
      <span className="block">{target}</span>
      <span className="block">{actual}</span>
      <span className="flex items-start justify-between">
        <span className="pt-0.5">
          <Square color={data.color} />
        </span>
        {balance}
      </span>
    </td>
  );
}

function PersonRows({ person, first, selected }: { person: Person; first: boolean; selected: boolean }) {
  return [0, 1, 2].map((row) => {
    const top = first && row === 0;
    return (
      <tr key={row}>
        {row === 0 && (
          <>
            <th
              scope="rowgroup"
              rowSpan={3}
              className={clsx(
                "border-x border-b p-0 pl-0.5 text-left align-top leading-4 font-normal whitespace-nowrap",
                top && "border-t",
                selected
                  ? "border-[#0000ff] bg-[#0a246a] text-white shadow-[0_-1px_0_#0000ff,inset_0_-1px_0_#0000ff]"
                  : "border-black bg-white",
              )}
            >
              <span className="block">{person.name}</span>
              <span className="block">{person.role}</span>
              <span className="block leading-[18px]">{person.quota}</span>
            </th>
            <td rowSpan={3} className="p-0" />
            <td rowSpan={3} className={clsx("border-x border-b border-black bg-[#b2b2b2] p-0 pl-1 align-top", top && "border-t")}>
              <span className="flex items-start justify-between pt-8 leading-4">
                <span className="pt-0.5">
                  <Square color="green" />
                </span>
                0:00
              </span>
            </td>
          </>
        )}
        <DayCells person={person} month="nov" row={row} top={top} />
        {row === 0 && (
          <>
            <SumCell data={person.novSum} dim top={top} />
            <td rowSpan={3} className="p-0" />
          </>
        )}
        <DayCells person={person} month="dec" row={row} top={top} />
        {row === 0 && (
          <>
            <SumCell data={person.decSum} top={top} />
            <td rowSpan={3} className="p-0" />
          </>
        )}
        <DayCells person={person} month="jan" row={row} top={top} />
        {row === 0 && <SumCell data={person.janSum} dim top={top} />}
      </tr>
    );
  });
}

function StaffCells({ month, row, values }: { month: Month; row: number; values: string }) {
  return values.split("").map((value, i) => {
    const low = month === "dec" && row === 0 && (i === 15 || i === 17);
    const high = value === "5";
    return (
      <td
        key={i}
        className={clsx(
          "relative border-r p-0 text-center leading-[17px]",
          rightLine(month, i),
          hasLeftLine(month, i) && "border-l border-l-black",
          row === 0 && "border-t border-t-black",
          row === 2 && "border-b border-b-black",
          low && "bg-[#ff0000]",
          high && (month === "dec" ? "bg-[#5050ff]" : "bg-[#3838b2]"),
          !low && !high && (month === "dec" ? "bg-[#00ff00]" : "bg-[#00b200]"),
        )}
      >
        {value}
        {month === "dec" && i === SELECTED_DAY && row === 0 && (
          <span className="absolute -top-px -left-[2px] z-10 h-[53px] w-[19px] border-2 border-t-0 border-[#0000ff]" />
        )}
      </td>
    );
  });
}

function Staffing() {
  return (
    <table className={tableLook}>
      <ScheduleColumns />
      <tbody>
        {STAFFING.map((shift, row) => {
          const edge = clsx(row === 0 && "border-t", row === 2 && "border-b");
          return (
            <tr key={shift.label}>
              <th scope="row" className={clsx("border-x border-black p-0 pl-0.5 text-left leading-[17px] font-normal", edge, shift.bg)}>
                {shift.label}
              </th>
              {row === 0 && (
                <>
                  <td rowSpan={3} className="p-0" />
                  <td rowSpan={3} className="border-y border-l border-black bg-[#b2b2b2] p-0 shadow-[inset_-1px_0_0_#000000]" />
                </>
              )}
              <StaffCells month="nov" row={row} values={shift.nov} />
              {row === 0 && (
                <>
                  <td rowSpan={3} className="border-y border-r border-black bg-[#b2b2b2] p-0" />
                  <td rowSpan={3} className="p-0" />
                </>
              )}
              <StaffCells month="dec" row={row} values={shift.dec} />
              {row === 0 && (
                <>
                  <td rowSpan={3} className="border-y border-r border-black bg-white p-0" />
                  <td rowSpan={3} className="p-0" />
                </>
              )}
              <StaffCells month="jan" row={row} values={shift.jan} />
              {row === 0 && <td rowSpan={3} className="border-y border-r border-black bg-[#b2b2b2] p-0" />}
            </tr>
          );
        })}
      </tbody>
    </table>
  );
}

function ScrollBar() {
  return (
    <div className="mr-px flex w-4 flex-col border-l border-[#808080] bg-[#d4d0c8]">
      <button type="button" aria-label="Nach oben blättern" className={clsx("flex h-4 items-center justify-center", raisedLook)}>
        <Pic w={7} h={4}><path d="M0 4h7L3.500 0z" fill="#000" /></Pic>
      </button>
      <div className="flex-1 border-y border-r border-[#808080]" />
      <button type="button" aria-label="Nach unten blättern" className={clsx("flex h-4 items-center justify-center", raisedLook)}>
        <Pic w={7} h={4}><path d="M0 0h7L3.500 4z" fill="#000" /></Pic>
      </button>
    </div>
  );
}

function DateBar() {
  return (
    <div className="flex h-[30px] items-center justify-between pr-[5px] pl-1.5">
      <div className="flex gap-2">
        <NavButton label="Plananfang"><Tiles at={BLOCK} red={0} /><Triangle dir="left" bar /></NavButton>
        <NavButton label="Monatsanfang"><Columns /><Triangle dir="left" bar /></NavButton>
        <NavButton label="Woche zurück"><Tiles at={LEFT_STEPS} red={3} /><Triangle dir="left" /></NavButton>
        <div className="pl-2">
          <NavButton label="Aktueller Monat" w={20}>
            <path d="M4 2h8l-4 7z" fill="#000" />
            <rect x="0" y="11" width="5" height="9" fill="#808080" />
            <rect x="15" y="11" width="5" height="9" fill="#808080" />
            <rect x="6.500" y="10.500" width="8" height="9" fill="#ff8080" stroke="#d01818" />
            <path d="M8 13.500h5M8 16.500h5" stroke="#fff" strokeDasharray="1 1" />
            <path d="M1 13.500h3M1 16.500h3M16 13.500h3M16 16.500h3" stroke="#e8e8e8" strokeDasharray="1 1" />
          </NavButton>
        </div>
      </div>
      <div className="flex items-center">
        <div className="mr-1 flex gap-2">
          <NavButton label="Person weiter"><Tiles at={COLUMN} red={1} /><path d="M8 8h8l-4 8z" fill="#000" /></NavButton>
          <NavButton label="Person zurück"><Tiles at={COLUMN} red={2} /><path d="M8 16h8l-4-8z" fill="#000" /></NavButton>
        </div>
        <input
          aria-label="Datum"
          defaultValue="Mi 12.12.2007"
          className="h-5 w-[104px] border border-t-[#808080] border-r-white border-b-white border-l-[#808080] bg-white pl-px"
        />
        <button type="button" aria-label="Kalender öffnen" className="flex h-5 w-5 items-center justify-center border border-[#808080] bg-white">
          <Pic w={9} h={5}><path d="M0 0h9L4.500 5z" fill="#000" /></Pic>
        </button>
        <button type="button" aria-label="Heute" className="ml-0.5 flex h-5 w-[18px] items-center justify-center border border-[#808080] bg-[#d4d0c8]">
          <Pic w={6} h={11}><path d="M0 0v11l6-5.500z" fill="#000" /></Pic>
        </button>
        <div className="ml-1.5 flex gap-2">
          <NavButton label="Tag zurück"><Tiles at={LINE} red={2} /><Triangle dir="left" /></NavButton>
          <NavButton label="Tag weiter"><Tiles at={LINE} red={1} /><Triangle dir="right" /></NavButton>
        </div>
      </div>
      <div className="flex gap-2">
        <NavButton label="Woche weiter"><Tiles at={RIGHT_STEPS} red={6} /><Triangle dir="right" /></NavButton>
        <NavButton label="Monatsende"><Columns mirror /><Triangle dir="right" bar /></NavButton>
        <NavButton label="Planende"><Tiles at={BLOCK} red={11} /><Triangle dir="right" bar /></NavButton>
      </div>
    </div>
  );
}

function Chip({ label, bg, children }: { label: string; bg: string; children?: ReactNode }) {
  return (
    <button
      type="button"
      aria-label={children ? label : undefined}
      className={clsx("flex size-[21px] items-center justify-center border border-[#c0c0c0] leading-4 shadow-[inset_0_0_0_1px_#ffffff]", bg)}
    >
      {children ?? label}
    </button>
  );
}

function Palette() {
  return (
    <aside className="flex w-8 shrink-0 flex-col items-center justify-between pt-[3px] pr-[7px] pb-1">
      <div className="flex flex-col items-center gap-[3px]">
        <button type="button" aria-label="Auswahl" className="flex h-6 w-[22px] items-center justify-center border-2 border-[#0000ff] bg-[#d4d0c8] shadow-[inset_0_0_0_1px_#ffffff]">
          <Pic w={12} h={16}><path d="M2 1v12l3-3 2 5 2-1-2-5h4z" fill="#000" /></Pic>
        </button>
        <Chip label="Radierer" bg="bg-[#d4d0c8]">
          <Pic w={16} h={12}>
            <path d="M1.500 7.500l6-6h7l-6 6z" fill="#c8ff96" stroke="#000" />
            <path d="M1.500 7.500h7v3h-7z" fill="#a0a0ff" stroke="#000" />
            <path d="M8.500 7.500l6-6v3l-6 6z" fill="#90e060" stroke="#000" />
          </Pic>
        </Chip>
        <Chip label="---" bg="bg-[#d4d0c8]" />
        <Chip label="F1" bg="bg-[#c8ff96]" />
        <Chip label="DF" bg="bg-[#ff96ff]" />
        <Chip label="S1" bg="bg-[#ffff96]" />
        <Chip label="SR" bg="bg-[#b4b400]" />
        <Chip label="N1" bg="bg-[#96c8ff]" />
        <Chip label="VE" bg="bg-[#ff9696]" />
      </div>
      <div className="flex flex-col items-center gap-[3px]">
        <Chip label="Leer" bg="bg-[#ece8dc]">
          <span className="block size-3 border border-black bg-white" />
        </Chip>
        <Chip label="dg" bg="bg-[#00ffff]" />
        <Chip label="fo" bg="bg-[#8000ff]" />
        <Chip label="km" bg="bg-[#ff0000]" />
        <Chip label="u" bg="bg-[#ffff00]" />
        <Chip label="ku" bg="bg-[#ff00ff]" />
      </div>
    </aside>
  );
}

export default function App() {
  return (
    <div className="flex min-h-screen flex-col border border-t-[#d4d0c8] border-r-[#404040] border-b-[#404040] border-l-[#d4d0c8] bg-[#d4d0c8] font-['DejaVu_Sans_Condensed','Noto_Sans',sans-serif] text-[11px] text-black">
      <div className="flex flex-1 flex-col border border-t-white border-r-[#808080] border-b-[#808080] border-l-white p-0.5">
        <TitleBar />
        <nav className="flex h-[26px] items-center gap-3.5 border-b border-[#808080] px-[7px] pt-0.5">
          {["Programm", "Hilfe", "Info", "Allgemein", "Abrechnung"].map((item) => (
            <button key={item} type="button">
              {item}
            </button>
          ))}
        </nav>

        <div className="flex h-[39px] items-center gap-4 pb-[3px] pl-[5px]">
          {TOOL_GROUPS.map((group, i) => (
            <div key={i} className="flex gap-1.5">
              {group.map((tool) => (
                <ToolButton key={tool.label} tool={tool} />
              ))}
            </div>
          ))}
        </div>

        {/* Document tab */}
        <div className="flex h-[22px] pl-1">
          <div className="relative flex h-[23px] items-center pr-2 pl-2">
            <span className="absolute inset-y-0 left-0 w-1/2 -skew-x-[8deg] rounded-tl-md border-t border-l border-white" />
            <span className="absolute inset-y-0 right-0 w-1/2 skew-x-[8deg] rounded-tr-md border-t border-r border-t-white border-r-[#808080] bg-[#d4d0c8]" />
            <span className="relative flex items-center">
              <GearsIcon />
              <span className="ml-[3px]">Chirurgie</span>
              <button type="button" aria-label="Tab schließen" className="ml-1.5">
                <Pic w={10} h={10}><path d="M1 1l8 8M9 1L1 9" stroke="#000" strokeWidth="2" /></Pic>
              </button>
            </span>
          </div>
        </div>

        <div className="flex flex-1 border border-t-white border-r-[#808080] border-b-[#808080] border-l-white">
          <Sidebar />
          <main className="ml-[5px] flex min-w-0 flex-1 flex-col border-r border-l border-r-white border-l-[#808080]">
            <div className="flex h-[25px] items-center justify-between pt-0.5 pr-2.5 pl-1 font-bold whitespace-pre">
              <h2>Dienstplan:  Chirurgie, Dezember 2007</h2>
              <h2>Person:  02/10256  Schubert, Hildegard</h2>
              <h2>Tageszelle:  Dienstplan (Plan,Soll,Ist)</h2>
            </div>
            <ScheduleHead />
            <div className="flex flex-1 justify-between">
              <div>
                {GROUPS.map((group, g) => (
                  <Fragment key={group.title}>
                    <h3 className="h-[15px] pl-0.5 leading-[15px] font-bold">{group.title}</h3>
                    <table className={tableLook}>
                      <ScheduleColumns />
                      <tbody>
                        {group.people.map((person, i) => (
                          <PersonRows key={person.name} person={person} first={i === 0} selected={g === 0 && i === 0} />
                        ))}
                      </tbody>
                    </table>
                  </Fragment>
                ))}
              </div>
              <ScrollBar />
            </div>
            <div className="mt-px">
              <Staffing />
            </div>
            <DateBar />
            <div className="h-0.5" />
          </main>
          <div className="ml-[5px] border-l border-[#808080]" />
          <Palette />
        </div>

        <footer className="h-[14px] text-right leading-[14px]">Präsentation</footer>
      </div>
    </div>
  );
}
